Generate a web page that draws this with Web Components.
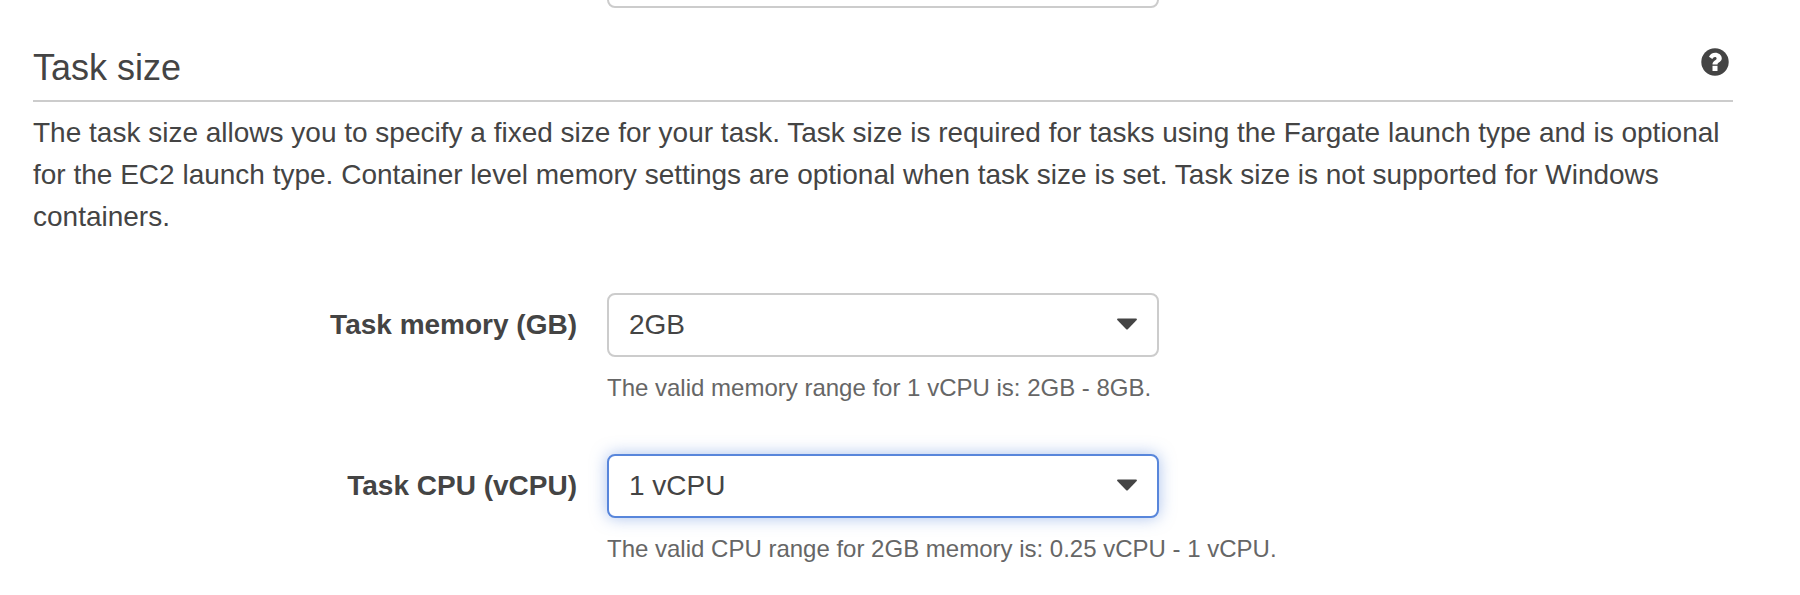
<!DOCTYPE html>
<html lang="en">
<head>
<meta charset="utf-8">
<title>Task size</title>
<style>
body { margin: 0; background: #fff; color: #444; font: 28px/42px "Liberation Sans", Arial, sans-serif; overflow: hidden; }
</style>
</head>
<body>
<task-page>
  <select-box slot="previous"></select-box>
  <section-header>Task size</section-header>
  <section-text>The task size allows you to specify a fixed size for your task. Task size is required for tasks using the Fargate launch type and is optional for the EC2 launch type. Container level memory settings are optional when task size is set. Task size is not supported for Windows containers.</section-text>
  <form-field>
    <span slot="label">Task memory (GB)</span>
    <select-box>2GB</select-box>
    <span slot="hint">The valid memory range for 1 vCPU is: 2GB - 8GB.</span>
  </form-field>
  <form-field>
    <span slot="label">Task CPU (vCPU)</span>
    <select-box active>1 vCPU</select-box>
    <span slot="hint">The valid CPU range for 2GB memory is: 0.25 vCPU - 1 vCPU.</span>
  </form-field>
</task-page>
<script>
const define = (name, html) => customElements.define(name, class extends HTMLElement {
  constructor() {
    super();
    const template = document.createElement('template');
    template.innerHTML = html;
    this.attachShadow({ mode: 'open' }).append(template.content.cloneNode(true));
  }
});

define('task-page', `
  <style>
    :host { display: block; box-sizing: border-box; width: 1800px; height: 595px; padding: 0 67px 0 33px; overflow: hidden; }
    .previous { display: flex; align-items: flex-end; height: 8px; padding-left: 574px; }
  </style>
  <div class="previous"><slot name="previous"></slot></div>
  <slot></slot>`);

define('section-header', `
  <style>
    :host { display: flex; justify-content: space-between; align-items: flex-start; box-sizing: border-box; height: 94px; padding: 39px 4px 0 0; border-bottom: 2px solid #ccc; }
    h2 { margin: 0; font-size: 36px; line-height: 41px; font-weight: 400; }
    svg { display: block; width: 28px; height: 28px; margin-top: 1px; }
  </style>
  <h2><slot></slot></h2>
  <svg viewBox="0 0 28 28" role="img" aria-label="Help">
    <circle cx="14" cy="14" r="13.7" fill="#444"/>
    <path d="M8 8.8C9.3 6 11.3 4.7 14.2 4.7c3.6 0 6.6 2.3 6.6 5.6 0 4-4.3 3.9-4.3 6.3h-5c0-4.3 4.1-4 4.1-6.2 0-1-.7-1.5-1.6-1.5-1.2 0-1.9.9-2.7 2.2z" fill="#fff"/>
    <path d="M11.5 17.8h5v5.2h-5z" fill="#fff"/>
  </svg>`);

define('section-text', `
  <style>:host { display: block; padding-top: 10px; margin-bottom: 55px; }</style>
  <slot></slot>`);

define('select-box', `
  <style>
    :host { display: flex; flex: none; justify-content: space-between; align-items: center; box-sizing: border-box; width: 552px; height: 64px; padding: 0 20px; border: 2px solid #ccc; border-radius: 8px; background: #fff; }
    :host([active]) { border-color: #5886db; box-shadow: 0 0 16px rgba(88, 134, 219, .5); }
    svg { display: block; width: 20px; height: 12px; margin-bottom: 2px; }
  </style>
  <span><slot></slot></span>
  <svg viewBox="0 0 20 12"><path d="M1 .5h18q1.5.5.5 1.8L11 11q-1 1-2 0L.5 2.3Q-.5 1 1 .5z" fill="#444"/></svg>`);

define('form-field', `
  <style>
    :host { display: grid; grid-template-columns: 544px 1fr; column-gap: 30px; height: 161px; align-content: start; }
    .label { font-weight: 700; text-align: right; align-self: center; }
    .hint { grid-column: 2; color: #666; font-size: 24px; line-height: 36px; padding-top: 13px; }
  </style>
  <div class="label"><slot name="label"></slot></div>
  <slot></slot>
  <div class="hint"><slot name="hint"></slot></div>`);
</script>
</body>
</html>
